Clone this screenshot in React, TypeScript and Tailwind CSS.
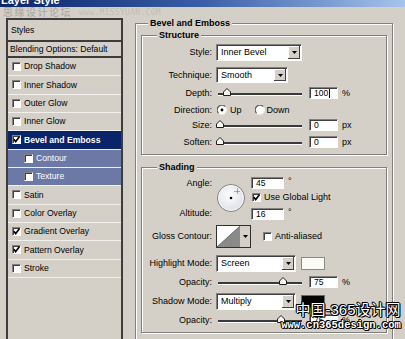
import React from "react";

const sunken =
  "border border-t-[#808080] border-l-[#808080] border-b-white border-r-white shadow-[inset_1px_1px_0_#404040]";

function Check({ on, className = "" }: { on?: boolean; className?: string }) {
  return (
    <span className={`flex w-[9px] h-[9px] shrink-0 items-center justify-center bg-white ${sunken} ${className}`}>
      {on && (
        <svg width="7" height="7" viewBox="0 0 7 7">
          <path d="M0.8 3.2 L2.7 5.6 L6.4 0.8" stroke="#000" strokeWidth="1.6" fill="none" />
        </svg>
      )}
    </span>
  );
}

function Radio({ on }: { on?: boolean }) {
  return (
    <svg width="10" height="10" viewBox="0 0 10 10" className="shrink-0">
      <circle cx="5" cy="5" r="4" fill="#fff" />
      <path d="M1.6 8.2 A4.5 4.5 0 0 1 8.2 1.6" stroke="#505050" strokeWidth="1.2" fill="none" />
      <path d="M8.2 1.6 A4.5 4.5 0 0 1 1.6 8.2" stroke="#f0f0f0" strokeWidth="1" fill="none" />
      {on && <circle cx="5" cy="5" r="1.4" fill="#000" />}
    </svg>
  );
}

function Arrow() {
  return (
    <svg width="5" height="3" viewBox="0 0 5 3">
      <path d="M0 0 H5 L2.5 3 Z" fill="#000" />
    </svg>
  );
}

function Select({ value, className }: { value: string; className: string }) {
  return (
    <div className={`flex bg-white ${sunken} ${className}`}>
      <span className="flex flex-1 items-center pl-[4px]">{value}</span>
      <span className="my-[1px] mr-[1px] flex w-[12px] items-center justify-center bg-[#d4d0c8] shadow-[inset_-1px_-1px_0_#404040,inset_1px_1px_0_#fff]">
        <Arrow />
      </span>
    </div>
  );
}

function Field({ value, className, caret }: { value: string; className: string; caret?: boolean }) {
  return (
    <div className={`flex items-center bg-white pl-[4px] text-[8.5px] ${sunken} ${className}`}>
      {value}
      {caret && <span className="ml-[1px] h-[9px] w-px bg-black" />}
    </div>
  );
}

function Slider({ thumb }: { thumb: string }) {
  return (
    <div className="relative ml-[4px] h-[12px] w-[86px]">
      <div className="absolute left-[2px] right-0 top-[6px] h-[2px] bg-[#3a3a3a] shadow-[0_1px_0_#fff]" />
      <svg className={`absolute top-[1px] ${thumb}`} width="8" height="8" viewBox="0 0 8 8">
        <path d="M0.5 7.5 V4 L4 0.5 L7.5 4 V7.5 Z" fill="#f6f6f2" stroke="#1e1e1e" />
      </svg>
    </div>
  );
}

const rows = [
  { label: "Drop Shadow" },
  { label: "Inner Shadow" },
  { label: "Outer Glow" },
  { label: "Inner Glow" },
  { label: "Bevel and Emboss", on: true, kind: "main" },
  { label: "Contour", kind: "sub" },
  { label: "Texture", kind: "sub" },
  { label: "Satin" },
  { label: "Color Overlay" },
  { label: "Gradient Overlay", on: true },
  { label: "Pattern Overlay", on: true },
  { label: "Stroke" },
];

const outline =
  "[text-shadow:1px_0_0_#000,-1px_0_0_#000,0_1px_0_#000,0_-1px_0_#000,1px_1px_0_#000,-1px_-1px_0_#000]";

export default function App() {
  return (
    <div className="relative h-[339px] w-[405px] overflow-hidden bg-[#d4d0c8] font-['Liberation_Sans','Noto_Sans_CJK_SC',sans-serif] text-[9px] leading-none text-black">
      {/* title bar, cut off at the top */}
      <div className="h-[7px] overflow-hidden bg-gradient-to-r from-[#0a246a] via-[#3a5fa8] to-[#a6c4ec]">
        <div className="-mt-[6px] pl-[1px] text-[11px] font-bold leading-[13px] text-white">Layer Style</div>
      </div>
      <div className="flex h-[11px] items-center gap-[7px] pl-[3px] text-[#a8a49c]">
        <span className="text-[10px] leading-[11px] tracking-[1.5px]">思缘设计论坛</span>
        <span className="font-['DejaVu_Sans_Mono',monospace] text-[8px] tracking-[0.3px] text-[#c2beb6]">www.MISSYUAN.COM</span>
      </div>

      <div className="flex items-start">
        {/* styles list */}
        <div className="ml-[6px] flex h-[330px] w-[117px] shrink-0 flex-col border-2 border-[#3c3c3c] text-[8.6px]">
          <div className="flex h-[22px] shrink-0 items-center border-b-2 border-[#3c3c3c] pl-[3px]">Styles</div>
          <div className="flex h-[16px] shrink-0 items-center border-b-2 border-[#3c3c3c] pl-[2px]">
            Blending Options: Default
          </div>
          {rows.map((r) => (
            <div
              key={r.label}
              className={`flex h-[18.33px] shrink-0 items-center gap-[3px] border-b border-[#f2f0ec] ${
                r.kind === "main"
                  ? "bg-[#0a246a] pl-[4px] font-bold text-white"
                  : r.kind === "sub"
                  ? "bg-[#6c78a6] pl-[16px] text-white"
                  : "pl-[4px]"
              }`}
            >
              <Check on={r.on} />
              <span>{r.label}</span>
            </div>
          ))}
        </div>

        {/* bevel and emboss */}
        <fieldset className="ml-[12px] h-[330px] w-[258px] min-w-0 shrink-0 border border-[#808080] p-0 shadow-[inset_1px_1px_0_#fff,1px_1px_0_#fff]">
          <legend className="ml-[12px] bg-[#d4d0c8] px-[2px] font-bold leading-[10px]">Bevel and Emboss</legend>
          <div className="px-[5px]">
            <fieldset className="mt-[2px] h-[125px] min-w-0 border border-[#808080] p-0 shadow-[inset_1px_1px_0_#fff,1px_1px_0_#fff]">
              <legend className="ml-[15px] bg-[#d4d0c8] px-[2px] font-bold leading-[10px]">Structure</legend>
              <div className="mt-[4px] flex h-[17px] items-center">
                <span className="w-[70px] text-right">Style:</span>
                <Select value="Inner Bevel" className="ml-[4px] h-[17px] w-[86px]" />
              </div>
              <div className="mt-[6px] flex h-[16px] items-center">
                <span className="w-[70px] text-right">Technique:</span>
                <Select value="Smooth" className="ml-[4px] h-[16px] w-[72px]" />
              </div>
              <div className="mt-[4px] flex h-[12px] items-center">
                <span className="w-[70px] text-right">Depth:</span>
                <Slider thumb="left-[7px]" />
                <Field value="100" caret className="ml-[7px] h-[12px] w-[29px]" />
                <span className="ml-[4px]">%</span>
              </div>
              <div className="mt-[6px] flex h-[10px] items-center">
                <span className="w-[70px] text-right">Direction:</span>
                <span className="ml-[5px] flex items-center gap-[3px]">
                  <Radio on />
                  Up
                </span>
                <span className="ml-[13px] flex items-center gap-[2px]">
                  <Radio />
                  Down
                </span>
              </div>
              <div className="mt-[4px] flex h-[12px] items-center">
                <span className="w-[70px] text-right">Size:</span>
                <Slider thumb="left-0" />
                <Field value="0" className="ml-[7px] h-[12px] w-[29px]" />
                <span className="ml-[4px]">px</span>
              </div>
              <div className="mt-[5px] flex h-[12px] items-center">
                <span className="w-[70px] text-right">Soften:</span>
                <Slider thumb="left-0" />
                <Field value="0" className="ml-[7px] h-[12px] w-[29px]" />
                <span className="ml-[4px]">px</span>
              </div>
            </fieldset>

            <fieldset className="mt-[7px] h-[171px] min-w-0 border border-[#808080] p-0 shadow-[inset_1px_1px_0_#fff,1px_1px_0_#fff]">
              <legend className="ml-[15px] bg-[#d4d0c8] px-[2px] font-bold leading-[10px]">Shading</legend>
              <div className="mt-[5px] flex h-[42px] items-start">
                <div className="flex w-[70px] flex-col items-end">
                  <span className="leading-[12px]">Angle:</span>
                  <span className="mt-[18px] leading-[12px]">Altitude:</span>
                </div>
                <svg className="ml-[4px] mt-[6px]" width="30" height="30" viewBox="0 0 30 30">
                  <defs>
                    <radialGradient id="dial" cx="45%" cy="40%" r="65%">
                      <stop offset="0" stopColor="#ffffff" />
                      <stop offset="1" stopColor="#d9dde6" />
                    </radialGradient>
                  </defs>
                  <circle cx="15" cy="15" r="13.5" fill="url(#dial)" stroke="#7c7c7c" />
                  <circle cx="15" cy="15" r="12.4" fill="none" stroke="#f8f8f8" />
                  <circle cx="15" cy="15" r="1.3" fill="#000" />
                  <path d="M21.5 5.5 V11.5 M18.5 8.5 H24.5" stroke="#444" strokeWidth="0.8" strokeDasharray="1 1" />
                </svg>
                <div className="ml-[5px] flex flex-col">
                  <div className="flex items-center">
                    <Field value="45" className="h-[12px] w-[33px]" />
                    <span className="ml-[4px] -mt-[4px]">°</span>
                  </div>
                  <div className="ml-[1px] mt-[4px] flex h-[9px] items-center gap-[3px]">
                    <Check on />
                    <span>Use Global Light</span>
                  </div>
                  <div className="mt-[6px] flex items-center">
                    <Field value="16" className="h-[12px] w-[33px]" />
                    <span className="ml-[4px] -mt-[4px]">°</span>
                  </div>
                </div>
              </div>

              <div className="mt-[6px] flex h-[23px] items-center">
                <span className="w-[70px] text-right">Gloss Contour:</span>
                <div className="ml-[4px] flex h-[23px] w-[35px] border border-[#303030] bg-white">
                  <svg width="23" height="21" viewBox="0 0 23 21">
                    <path d="M0 21 L23 0 V21 Z" fill="#8a8a8a" />
                    <path d="M0 21 L23 0" stroke="#5a5a5a" strokeWidth="0.8" />
                  </svg>
                  <span className="flex flex-1 items-center justify-center bg-[#d4d0c8]">
                    <Arrow />
                  </span>
                </div>
                <Check className="ml-[12px]" />
                <span className="ml-[3px]">Anti-aliased</span>
              </div>

              <div className="mt-[7px] flex h-[17px] items-center">
                <span className="w-[70px] text-right">Highlight Mode:</span>
                <Select value="Screen" className="ml-[4px] h-[17px] w-[80px]" />
                <span className="ml-[5px] h-[13px] w-[24px] border border-[#8a8a8a] bg-[#fbfbf6]" />
              </div>
              <div className="mt-[4px] flex h-[12px] items-center">
                <span className="w-[70px] text-right">Opacity:</span>
                <Slider thumb="left-[63px]" />
                <Field value="75" className="ml-[7px] h-[12px] w-[29px]" />
                <span className="ml-[4px]">%</span>
              </div>
              <div className="mt-[5px] flex h-[17px] items-center">
                <span className="w-[70px] text-right">Shadow Mode:</span>
                <Select value="Multiply" className="ml-[4px] h-[17px] w-[80px]" />
                <span className="ml-[5px] h-[13px] w-[24px] border border-[#6a6a6a] bg-[#050505]" />
              </div>
              <div className="mt-[4px] flex h-[12px] items-center">
                <span className="w-[70px] text-right">Opacity:</span>
                <Slider thumb="left-[61px]" />
                <Field value="75" className="ml-[7px] h-[12px] w-[29px]" />
                <span className="ml-[4px]">%</span>
              </div>
            </fieldset>
          </div>
        </fieldset>
      </div>

      {/* site watermark over the corner */}
      <div className="absolute left-[280px] top-[301px] flex w-[122px] flex-col items-center text-white">
        <span className={`ml-[14px] text-[15px] leading-[18px] ${outline}`}>中国-365设计网</span>
        <span className={`font-['Liberation_Mono',monospace] text-[10.5px] font-bold leading-[13px] ${outline}`}>
          www.cn365design.com
        </span>
      </div>
    </div>
  );
}
